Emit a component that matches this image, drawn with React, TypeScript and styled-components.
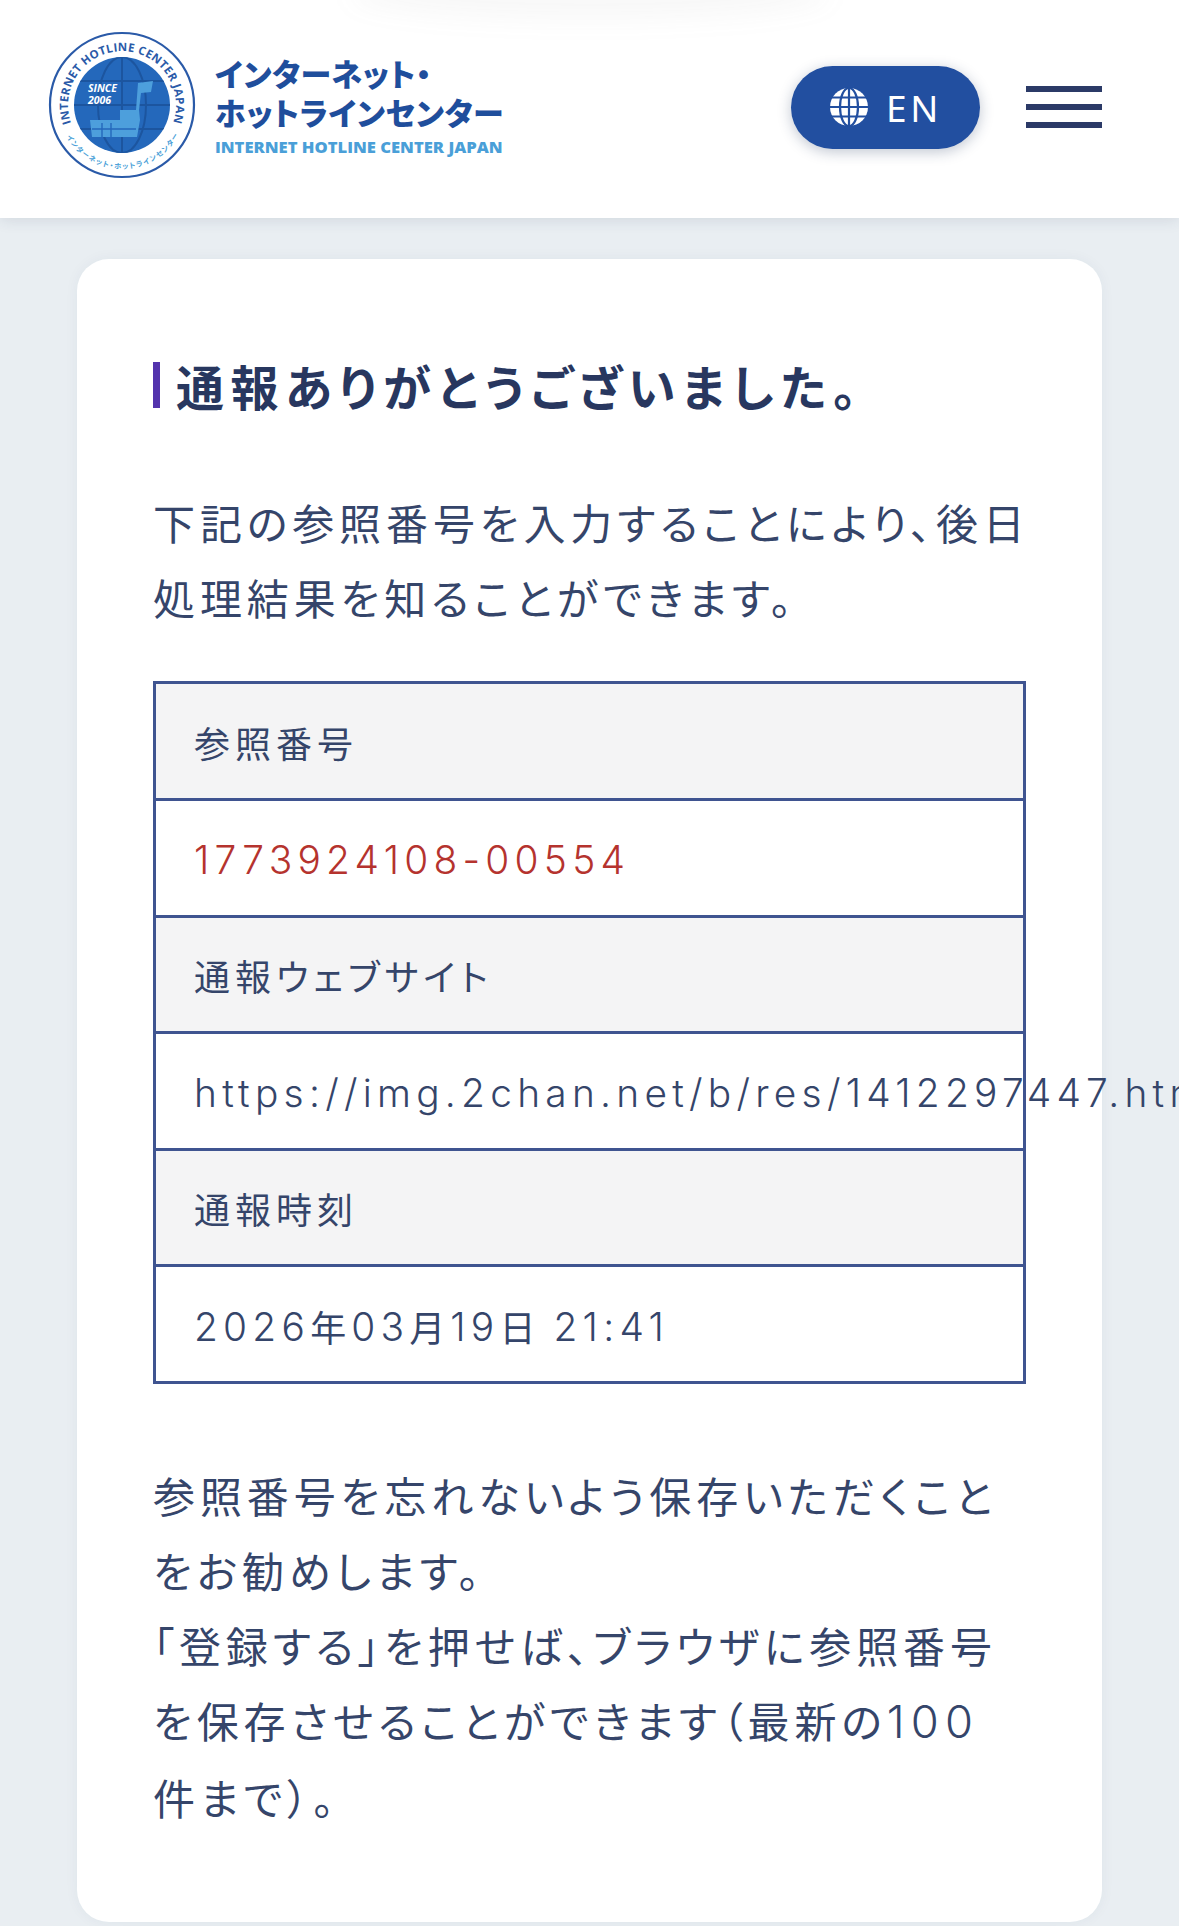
import React from "react";
import styled, { createGlobalStyle } from "styled-components";

const Global = createGlobalStyle`
  html, body { margin: 0; padding: 0; background: #e9eef2; overflow-x: hidden; }
  body { font-family: "Noto Sans CJK JP", "Noto Sans", sans-serif; font-feature-settings: "palt"; }
  * { box-sizing: border-box; }
`;

const Page = styled.div`
  width: 1179px;
  height: 1926px;
  overflow: hidden;
  background: #e9eef2;
`;

const Header = styled.header`
  position: relative;
  height: 218px;
  background: #fff;
  box-shadow: 0 2px 14px rgba(40, 60, 90, 0.12);
  display: flex;
  align-items: center;
  padding: 0 77px 4px 48px;
  overflow: visible;
`;

const TopGlow = styled.div`
  position: absolute;
  top: -30px;
  left: 350px;
  width: 480px;
  height: 50px;
  border-radius: 50%;
  background: rgba(120, 120, 120, 0.05);
  filter: blur(12px);
`;

const LogoMark = styled.svg`
  width: 148px;
  height: 148px;
  flex: none;
  margin-top: -4px;
`;

const LogoText = styled.div`
  display: flex;
  flex-direction: column;
  margin-left: 19px;
  margin-top: -5px;
`;

const LogoJa = styled.div`
  font-size: 31px;
  line-height: 39px;
  font-weight: 900;
  color: #1f4e9c;
  letter-spacing: 0.5px;
  white-space: nowrap;
`;

const LogoEn = styled.div`
  font-family: "Open Sans", "Noto Sans", sans-serif;
  font-size: 16.6px;
  line-height: 20px;
  margin-top: 6px;
  font-weight: 800;
  color: #4a9fd8;
  white-space: nowrap;
`;

const LangButton = styled.button`
  margin-left: auto;
  width: 189px;
  height: 83px;
  border: none;
  border-radius: 42px;
  background: #224fa0;
  color: #fff;
  display: flex;
  align-items: center;
  padding: 0 0 0 38px;
  gap: 17px;
  box-shadow: 0 3px 14px rgba(30, 50, 90, 0.28);
  font-family: "Noto Sans", sans-serif;
  font-size: 37px;
  letter-spacing: 3.6px;
`;

const Burger = styled.div`
  width: 76px;
  margin-left: 46px;
  display: flex;
  flex-direction: column;
  gap: 12px;
`;

const BurgerLine = styled.span`
  display: block;
  height: 6px;
  background: #2b3a67;
`;

const Card = styled.main`
  margin: 41px 77px 0;
  width: 1025px;
  height: 1663px;
  background: #fff;
  border-radius: 32px;
  padding: 103px 77px 0 76px;
  box-shadow: 0 0 14px rgba(40, 60, 90, 0.05);
`;

const Heading = styled.h1`
  margin: 0;
  display: flex;
  align-items: center;
  border-left: 7px solid #5333ad;
  height: 46px;
  padding-left: 16px;
  font-size: 48px;
  line-height: 44px;
  font-weight: 600;
  letter-spacing: 6.5px;
  color: #28375f;
  white-space: nowrap;
`;

const Para = styled.p<{ $top: number }>`
  margin: ${(p) => p.$top}px 0 0;
  font-size: 42px;
  line-height: 75px;
  letter-spacing: 4.9px;
  font-weight: 400;
  color: #35456a;
  white-space: nowrap;
`;

const InfoTable = styled.div`
  margin-top: 47px;
  width: 873px;
  border: 3px solid #3f5490;
  display: flex;
  flex-direction: column;
`;

const Cell = styled.div<{ $head?: boolean; $red?: boolean }>`
  height: 116.6px;
  display: flex;
  align-items: center;
  padding: ${(p) => (p.$head ? "1px" : "4px")} 0 0 38px;
  background: ${(p) => (p.$head ? "#f4f4f5" : "#fff")};
  border-top: 3px solid #3f5490;
  font-size: 36px;
  letter-spacing: 5px;
  color: ${(p) => (p.$red ? "#b5332e" : "#35456a")};
  white-space: pre;
  &:first-child { border-top: none; height: 114px; }
`;

const Latin = styled.span`
  font-family: Inter, "Noto Sans", sans-serif;
  font-size: 1.08em;
  font-weight: 300;
  letter-spacing: 0.135em;
`;

export default function App() {
  return (
    <Page>
      <Global />
      <Header>
        <TopGlow />
        <LogoMark viewBox="0 0 148 148" role="img" aria-label="Internet Hotline Center Japan">
          <defs>
            <path id="topArc" d="M 23.4 93 A 54 54 0 1 1 124.6 93" />
            <path id="botArc" d="M 18 105 A 64 64 0 0 0 130 105" />
            <clipPath id="inner"><circle cx="74" cy="74" r="48" /></clipPath>
          </defs>
          <circle cx="74" cy="74" r="72" fill="#fff" stroke="#2a5aa8" strokeWidth="2.2" />
          <circle cx="74" cy="74" r="48" fill="#2468bb" />
          <g clipPath="url(#inner)" stroke="#1c559f" strokeWidth="2" fill="none">
            <ellipse cx="74" cy="74" rx="24" ry="48" />
            <path d="M74 26V122M26 74H122M32 50H116M32 98H116" />
          </g>
          <path
            d="M90 52L105 50L103 61L93 62L91 79L92 89L89 106L44 106L42 89L72 89L72 79L88 79Z"
            fill="#4d9fdc"
          />
          <path d="M54 92V106M63 92V106M44 98H88" stroke="#2468bb" strokeWidth="1.4" fill="none" />
          <text x="40" y="61" fontFamily="Open Sans, sans-serif" fontSize="10.5" fontWeight="700" fontStyle="italic" fill="#fff">SINCE</text>
          <text x="40" y="73" fontFamily="Open Sans, sans-serif" fontSize="10.5" fontWeight="700" fontStyle="italic" fill="#fff">2006</text>
          <text fontFamily="Open Sans, sans-serif" fontSize="11.5" fontWeight="700" fill="#2a5aa8">
            <textPath href="#topArc" textLength="205" lengthAdjust="spacing" startOffset="1">INTERNET HOTLINE CENTER JAPAN</textPath>
          </text>
          <text fontFamily="Noto Sans CJK JP, sans-serif" fontSize="7.2" fontWeight="700" fill="#4a9fd8">
            <textPath href="#botArc" textLength="136" lengthAdjust="spacing" startOffset="1">インターネット・ホットラインセンター</textPath>
          </text>
        </LogoMark>
        <LogoText>
          <LogoJa>インターネット・</LogoJa>
          <LogoJa>ホットラインセンター</LogoJa>
          <LogoEn>INTERNET HOTLINE CENTER JAPAN</LogoEn>
        </LogoText>
        <LangButton>
          <svg width="40" height="40" viewBox="0 0 40 40" fill="none">
            <circle cx="20" cy="20" r="19" fill="#fff" />
            <g stroke="#224fa0" strokeWidth="2.2">
              <ellipse cx="20" cy="20" rx="9" ry="19" />
              <path d="M20 0V40M0 20H40M3 10.5H37M3 29.5H37" />
            </g>
          </svg>
          EN
        </LangButton>
        <Burger>
          <BurgerLine />
          <BurgerLine />
          <BurgerLine />
        </Burger>
      </Header>
      <Card>
        <Heading>通報ありがとうございました。</Heading>
        <Para $top={76}>
          下記の参照番号を入力することにより、後日
          <br />
          処理結果を知ることができます。
        </Para>
        <InfoTable>
          <Cell $head>参照番号</Cell>
          <Cell $red><Latin>1773924108-00554</Latin></Cell>
          <Cell $head>通報ウェブサイト</Cell>
          <Cell><Latin>https://img.2chan.net/b/res/1412297447.htm</Latin></Cell>
          <Cell $head>通報時刻</Cell>
          <Cell><Latin>2026</Latin>年<Latin>03</Latin>月<Latin>19</Latin>日 <Latin>21:41</Latin></Cell>
        </InfoTable>
        <Para $top={73}>
          参照番号を忘れないよう保存いただくこと
          <br />
          をお勧めします。
          <br />
          「登録する」を押せば、ブラウザに参照番号
          <br />
          を保存させることができます（最新の<Latin>100</Latin>
          <br />
          件まで）。
        </Para>
      </Card>
    </Page>
  );
}
